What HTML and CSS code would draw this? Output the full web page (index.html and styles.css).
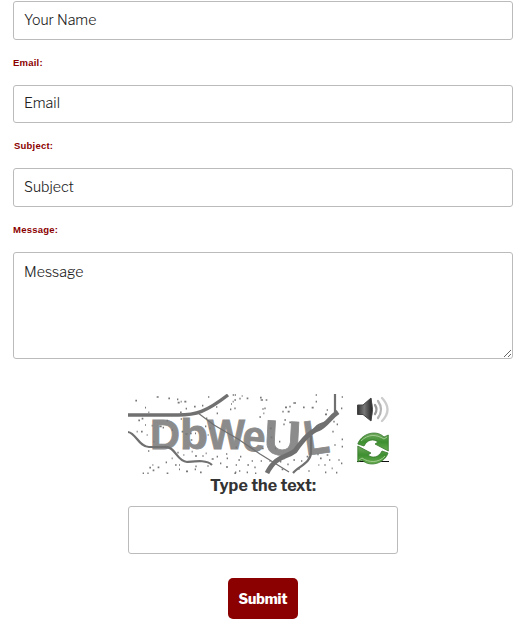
FILE: index.html
```html
<!DOCTYPE html>
<html lang="en">
<head>
<meta charset="utf-8">
<title>Contact</title>
<link rel="stylesheet" href="styles.css">
</head>
<body>
<form class="form">
  <input class="field" type="text" placeholder="Your Name" aria-label="Your Name">
  <label class="label" for="email">Email:</label>
  <input class="field field-email" id="email" type="text" placeholder="Email">
  <label class="label label-subject" for="subject">Subject:</label>
  <input class="field" id="subject" type="text" placeholder="Subject">
  <label class="label" for="message">Message:</label>
  <textarea class="field area" id="message" placeholder="Message"></textarea>
  <div class="captcha">
    <div class="row">
      <svg class="picture" viewBox="0 0 215 80" width="215" height="80">
        <g class="letters">
          <text x="22" y="55" textLength="30" lengthAdjust="spacingAndGlyphs">D</text>
          <text x="52" y="55" textLength="28" lengthAdjust="spacingAndGlyphs">b</text>
          <text x="79" y="55" textLength="38" lengthAdjust="spacingAndGlyphs">W</text>
          <text x="114" y="57" textLength="23" lengthAdjust="spacingAndGlyphs" transform="rotate(5 125 50)">e</text>
          <text class="large" x="136" y="61" textLength="37" lengthAdjust="spacingAndGlyphs" transform="rotate(3 154 45)">U</text>
          <text class="large" x="176" y="60" textLength="25" lengthAdjust="spacingAndGlyphs" transform="rotate(-8 188 45)">L</text>
        </g>
        <g class="lines">
          <path class="w3" d="M0 21H50C68 21 78 18 100 1"/>
          <path class="w2" d="M0 38C8 39 11 53 21 53H36C48 52 48 67 59 68C70 67 79 66 84 71"/>
          <path class="w1" d="M70 19L86 31L110 45L132 60L161 78"/>
          <path class="w4" d="M139 79C148 61 158 64 167 57C174 47 181 38 190 35C199 31 201 24 210 18"/>
          <path class="w2" d="M207 0V18M183 42V58C183 69 171 72 165 79M184 39C190 25 200 33 207 20"/>
        </g>
        <path class="specks" transform="translate(-8 -9) scale(.33333)" d="M46 47h5M110 36h6M75 68h3M85 82h3M145 40h5M171 43h4M173 53h6M182 50h3M193 50h6M197 71h4M180 82h5M222 65h5M246 62h4M264 36h4M262 69h5M288 66h4M306 43h4M344 30h4M343 45h5M333 57h3M330 73h4M358 41h4M55 106h5M65 101h5M75 120h3M95 122h3M63 140h5M80 150h3M118 124h7M128 128h4M50 140h3M140 107h4M155 135h4M182 102h4M185 140h5M196 147h7M212 165h5M210 145h5M225 145h3M255 124h4M263 150h3M268 130h4M258 100h4M290 85h4M84 198h4M100 170h3M172 203h4M215 200h3M190 210h3M225 213h6M247 213h4M257 205h3M275 222h6M290 215h4M318 207h4M320 220h4M347 187h4M68 265h4M82 265h4M88 248h5M97 240h3M113 247h5M98 256h5M140 265h5M155 220h3M137 232h4M165 240h5M177 240h3M177 253h3M198 259h6M224 253h4M226 244h4M240 262h5M262 243h4M300 235h4M318 246h6M345 262h4M347 240h4"/>
        <path class="specks" transform="translate(102 -9) scale(.33333)" d="M8 30h4M35 33h3M50 40h5M90 38h5M92 45h7M107 45h5M103 70h4M97 72h4M88 96h5M13 70h4M8 50h3M100 85h3M157 80h4M165 67h6M178 65h4M190 54h8M219 67h5M245 68h6M257 30h4M257 50h4M173 80h6M163 105h5M178 112h5M160 118h4M120 130h5M122 157h5M135 190h3M147 170h4M285 88h6M290 75h4M335 36h4M333 70h4M310 110h4M320 118h4M307 140h4M335 163h4M313 180h4M335 185h4M325 225h4M333 235h4M290 210h5M270 220h5M262 208h4M283 240h4M265 240h3M297 225h4M305 250h3M285 262h4M318 263h4M13 265h5M27 258h4M50 262h4M52 240h5M73 247h4M75 265h4M25 225h5M30 215h4M65 228h4M92 228h4M95 190h6M118 228h4M150 230h4M155 253h5M160 220h4M172 238h4M190 225h5M213 228h4M230 215h5M205 252h4M235 258h4"/>
      </svg>
      <div class="tools">
        <svg viewBox="0 0 32 32" width="32" height="32">
          <defs>
            <linearGradient id="cone"><stop offset="0" stop-color="#333"/><stop offset=".45" stop-color="#777"/><stop offset="1" stop-color="#222"/></linearGradient>
            <linearGradient id="leaf" x2="0" y2="1"><stop offset="0" stop-color="#72a95f"/><stop offset=".5" stop-color="#3d8f30"/><stop offset="1" stop-color="#69ad50"/></linearGradient>
          </defs>
          <path fill="url(#cone)" stroke="#444" stroke-linejoin="round" d="M.5 11H6L14 4Q17 15.500 14 27L6 20.500H.5Z"/>
          <g fill="none" stroke-linecap="round" stroke-width="2.300">
            <path stroke="#999" d="M18 11Q21 15.500 18 20"/>
            <path stroke="#b5b5b5" d="M21 7Q27 15.500 21 24"/>
            <path stroke="#ccc" d="M25 4Q36 15.500 25 27"/>
          </g>
        </svg>
        <svg viewBox="0 0 32 33" width="32" height="33">
          <path stroke="#111" d="M0 29.500H32"/>
          <path fill="#fff" d="M8 14L15 7L23 11L25 20L18 27L10 22Z"/>
          <g fill="url(#leaf)" stroke="#39792e" stroke-width=".8" stroke-linejoin="round">
            <path d="M.8 12C4 2 19-3 27 5L31.300 3V19L18 12L21 10C16 6 10 8 7 14Z"/>
            <path d="M31 21C28 31 13 36 5 28L.8 30V14L14 21L11 23C16 27 22 25 25 19Z"/>
          </g>
          <path fill="none" stroke="#a1cb91" d="M4 9C11 2 19 2 27 7L30 5M28 24C22 31 12 31 5 26L2 28"/>
        </svg>
      </div>
    </div>
    <label class="prompt" for="answer">Type the text:</label>
    <input class="answer" id="answer" type="text">
  </div>
  <button class="submit" type="button">Submit</button>
</form>
</body>
</html>
```

FILE: styles.css
```css
* { box-sizing: border-box; }
body { margin: 0; background: #fff; }
.form { display: flex; flex-direction: column; padding: 1px 13px 0; }
.field {
  width: 500px; height: 39px; margin: 0; padding: 0 10px 2px;
  border: 1px solid #bbb; border-radius: 3px; background: #fff;
  font: 300 14.200px "Libre Franklin", Roboto, sans-serif; color: #222;
}
.field-email { height: 38px; padding-bottom: 3px; }
.field::placeholder { color: #222; opacity: 1; }
.label {
  height: 45px; padding-top: 1px;
  font: bold 9.500px/43px "Liberation Sans", sans-serif; letter-spacing: .22px; color: #8b0000;
}
.label-subject { padding-left: 1px; }
.area { height: 107px; padding-top: 10px; resize: vertical; }
.captcha { width: 270px; margin: 35px 0 0 115px; display: flex; flex-direction: column; }
.row { display: flex; gap: 14px; height: 80px; }
.tools { display: flex; flex-direction: column; gap: 6px; }
.letters { font: bold 43px "Liberation Sans", sans-serif; fill: #8b8b8b; stroke: #8b8b8b; stroke-width: .8; }
.large { font-size: 49px; }
.lines { fill: none; stroke: #707070; }
.w1 { stroke-width: 1.2; }
.w2 { stroke-width: 2.2; }
.w3 { stroke-width: 3.4; }
.w4 { stroke-width: 4.8; }
.specks { fill: none; stroke: #777; stroke-width: 5; }
.prompt {
  height: 32px; text-align: center; color: #333;
  font: bold 16px/23px "Libre Franklin", "Open Sans", sans-serif; letter-spacing: .05px;
}
.answer { width: 270px; height: 48px; border: 1px solid #bbb; border-radius: 3px; background: #fff; }
.submit {
  width: 70px; height: 41px; margin: 24px 0 0 215px; padding: 0;
  border: 0; border-radius: 5px; background: #8b0000; color: #fff;
  font: 800 14px "Libre Franklin", "Open Sans", sans-serif; letter-spacing: -.1px;
}
```
